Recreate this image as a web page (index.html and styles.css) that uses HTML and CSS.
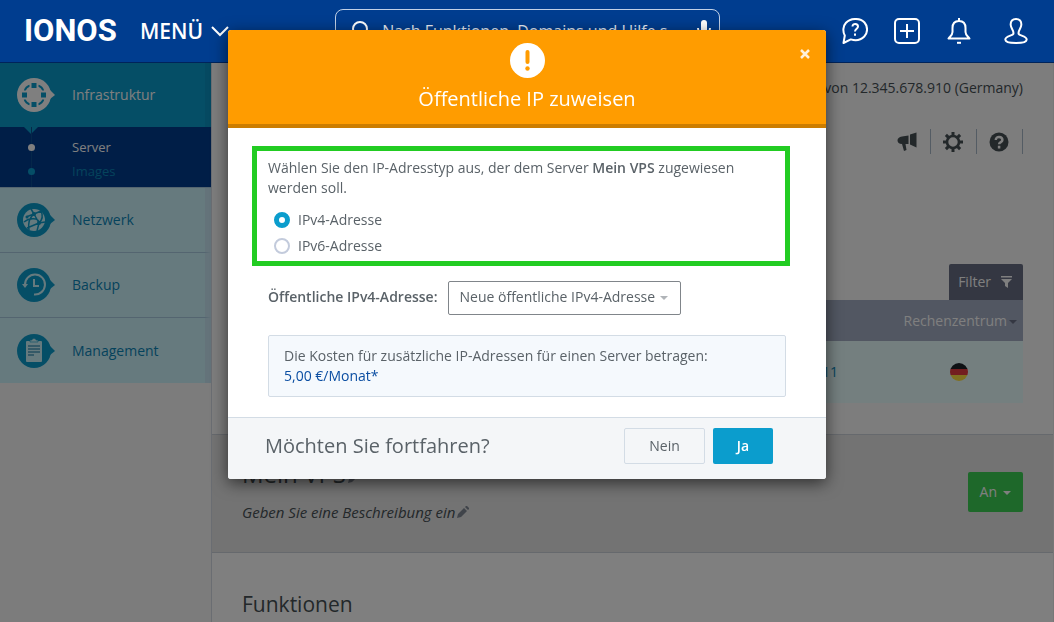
FILE: index.html
```html
<!DOCTYPE html>
<html lang="de">
<head>
    <meta charset="UTF-8">
    <meta name="viewport" content="width=device-width, initial-scale=1.0">
    <title>IONOS - Öffentliche IP zuweisen</title>
    <link rel="stylesheet" href="styles.css">
</head>

<body>

<header class="topbar">
    <a href="#" class="logo">IONOS</a>
    <button class="menu-btn">MENÜ
        <svg width="18" height="12" viewBox="0 0 18 12"><path d="M1 2l8 8 8-8" fill="none" stroke="currentColor" stroke-width="2"/></svg>
    </button>

    <div class="search">
        <svg width="18" height="22" viewBox="0 0 18 22"><circle cx="9" cy="9" r="7" fill="none" stroke="currentColor" stroke-width="2"/><path d="M13 15l4 5" stroke="currentColor" stroke-width="2"/></svg>
        <input type="text" placeholder="Nach Funktionen, Domains und Hilfe s" aria-label="Suche">
        <svg width="14" height="22" viewBox="0 0 14 22"><rect x="4" y="0" width="6" height="13" rx="3" fill="currentColor"/><path d="M1 8c0 9 12 9 12 0M7 15v6M3 21h8" fill="none" stroke="currentColor" stroke-width="2"/></svg>
    </div>

    <nav class="top-icons">
        <button aria-label="Hilfe">
            <svg width="26" height="26" viewBox="0 0 26 26" fill="none" stroke="currentColor" stroke-width="2"><path d="M1.5 25l1.3-7.5C.5 13.500 1 8 4 4.800 8.500-.2 18-.3 22.500 4.500c3.500 4 3.400 10.300-.2 14-4 4-9.300 4.300-13.500 2.900L1.500 25z" stroke-linejoin="round"/><path d="M10.500 8.500c0-3.500 5.500-3.300 5.500 0 0 2.200-3 2.200-3 5"/><path d="M13 15.500v2.300"/></svg>
        </button>
        <button aria-label="Hinzufügen">
            <svg width="26" height="26" viewBox="0 0 26 26" fill="none" stroke="currentColor" stroke-width="2"><rect x="1" y="1" width="24" height="24" rx="4"/><path d="M13 6v14M6 13h14"/></svg>
        </button>
        <button aria-label="Benachrichtigungen">
            <svg width="26" height="26" viewBox="0 0 26 26" fill="none" stroke="currentColor" stroke-width="2"><path d="M13 0v3M13 3c-4.500 0-6.500 3-6.500 7v4c0 3-2 4-4 6.500h21c-2-2.500-4-3.500-4-6.500v-4c0-4-2-7-6.500-7z" stroke-linejoin="round"/><path d="M11 24.800h4"/></svg>
        </button>
        <button class="account" aria-label="Konto">
            <svg width="26" height="26" viewBox="0 0 26 26" fill="none" stroke="currentColor" stroke-width="2"><path d="M13 1c-3.500 0-5.600 2-5.300 6 .2 3.500 3.800 6 2.600 9-.8 1.700-8 2-8 5.500 0 2.500 5 3.500 10.700 3.500s10.700-1 10.700-3.500c0-3.500-7.200-3.800-8-5.500-1.200-3 2.400-5.500 2.600-9 .3-4-1.800-6-5.300-6z" stroke-linejoin="round"/></svg>
        </button>
    </nav>
</header>

<div class="page">
    <aside class="sidebar">
        <a href="#" class="side-item active">
            <svg width="38" height="34" viewBox="0 0 38 34"><circle cx="17" cy="17" r="17" fill="#fff"/><path d="M33 12l5 5-5 4z" fill="#fff"/><rect x="7.500" y="7.500" width="19" height="19" rx="7" fill="none" stroke="#0b9dcd" stroke-width="2"/><g fill="#0b9dcd" stroke="#fff" stroke-width="2"><path d="M13.500 4h7v7h-7zM13.500 23h7v7h-7zM4 13.500h7v7H4zM23 13.500h7v7h-7z"/></g></svg>
            Infrastruktur
        </a>
        <ul class="submenu">
            <li class="current"><a href="#">Server</a></li>
            <li><a href="#">Images</a></li>
        </ul>
        <a href="#" class="side-item">
            <svg width="38" height="34" viewBox="0 0 38 34"><circle cx="17" cy="17" r="17" fill="#0b9dcd"/><path d="M33 12l5 5-5 4z" fill="#0b9dcd"/><circle cx="17" cy="17" r="11" fill="#cdf4fd"/><path d="M17 11L9 14M17 11l5 9M17 11l7-3M17 11l-3-5M17 11c-5 4-6 10-5 16M22 20l-12 5M22 20l6-1M22 20l-2 8M22 20c0-5-9-6-15-1M22 20c4-4 4-8 2-12" fill="none" stroke="#0b9dcd" stroke-width="1.500"/><circle cx="17" cy="11" r="2" fill="#0b9dcd"/><circle cx="22" cy="20" r="2" fill="#0b9dcd"/><circle cx="10" cy="14" r="1.500" fill="#0b9dcd"/></svg>
            Netzwerk
        </a>
        <a href="#" class="side-item">
            <svg width="38" height="34" viewBox="0 0 38 34"><circle cx="17" cy="17" r="17" fill="#0b9dcd"/><path d="M33 12l5 5-5 4z" fill="#0b9dcd"/><path d="M8 17a10 10 0 1 1 9 9.500" fill="none" stroke="#cdf4fd" stroke-width="2"/><path d="M5 16h6l-3 4z" fill="#cdf4fd"/><path d="M17 11v7h5" fill="none" stroke="#cdf4fd" stroke-width="2"/></svg>
            Backup
        </a>
        <a href="#" class="side-item">
            <svg width="38" height="34" viewBox="0 0 38 34"><circle cx="17" cy="17" r="17" fill="#0b9dcd"/><path d="M33 12l5 5-5 4z" fill="#0b9dcd"/><rect x="9" y="7" width="16" height="21" rx="1" fill="#cdf4fd"/><path d="M13 8V6h2c0-2 4-2 4 0h2v2z" fill="#cdf4fd" stroke="#0b9dcd" stroke-width=".6"/><path d="M11 12h12M11 15h12M11 18h12M11 21h6" stroke="#4a9cbf" stroke-width="1.500"/></svg>
            Management
        </a>
    </aside>

    <main class="content">
        <section class="overview">
            <p class="login-info">von 12.345.678.910 (Germany)</p>

            <div class="tools">
                <button aria-label="Neuigkeiten">
                    <svg width="20" height="20" viewBox="0 0 20 20" fill="currentColor"><path d="M13 2.500l6.500-2v15l-6.500-3zM11.500 3.500v8.500H8.500l1 6-2.500 1-2-7c-6 0-6-7 0-7.500z"/></svg>
                </button>
                <button aria-label="Einstellungen">
                    <svg width="20" height="20" viewBox="0 0 20 20"><circle cx="10" cy="10" r="6" fill="none" stroke="currentColor" stroke-width="2.600"/><path d="M10 0v3.500M10 16.500V20M0 10h3.500M16.500 10H20M2.900 2.900l2.500 2.500M14.600 14.600l2.500 2.500M17.100 2.900l-2.500 2.500M5.400 14.600l-2.500 2.500" stroke="currentColor" stroke-width="3"/></svg>
                </button>
                <button aria-label="Hilfe">
                    <svg width="20" height="20" viewBox="0 0 20 20"><circle cx="10" cy="10" r="9.500" fill="currentColor"/><path d="M6.800 8c0-4.300 6.600-4 6.600 0 0 2.200-3.300 2-3.300 4.300M10.100 13.800v2.600" fill="none" stroke="#fff" stroke-width="2.500"/></svg>
                </button>
            </div>

            <button class="filter-btn">Filter
                <svg width="11" height="12" viewBox="0 0 11 12" fill="currentColor"><path d="M0 0h11v1.500H0zM0 3h11L7 7v5L4 10V7z"/></svg>
            </button>
            <table class="servers">
                <thead>
                    <tr><th></th><th>Rechenzentrum<i class="caret"></i></th></tr>
                </thead>
                <tbody>
                    <tr>
                        <td class="ip">11</td>
                        <td class="location">
                            <svg width="18" height="18" viewBox="0 0 18 18" role="img" aria-label="Deutschland"><clipPath id="round"><circle cx="9" cy="9" r="9"/></clipPath><g clip-path="url(#round)"><path d="M0 0h18v6H0z" fill="#1c2228"/><path d="M0 6h18v6H0z" fill="#e63c40"/><path d="M0 12h18v6H0z" fill="#ffe040"/></g></svg>
                        </td>
                    </tr>
                </tbody>
            </table>
        </section>

        <section class="detail">
            <div>
                <h2>Mein VPS<svg width="12" height="12" viewBox="0 0 12 12" fill="currentColor"><path d="M0 12l1-4 6-6 3 3-6 6zM8 1l1-1h1l2 2v1l-1 1z"/></svg></h2>
                <p>Geben Sie eine Beschreibung ein<svg width="12" height="12" viewBox="0 0 12 12" fill="currentColor"><path d="M0 12l1-4 6-6 3 3-6 6zM8 1l1-1h1l2 2v1l-1 1z"/></svg></p>
            </div>
            <button class="power-btn">An<i class="caret"></i></button>
        </section>

        <section class="features">
            <h2>Funktionen</h2>
        </section>
    </main>
    <div class="backdrop"></div>
</div>

<div class="modal-layer">
    <div class="modal" role="dialog" aria-modal="true" aria-labelledby="modal-title">
        <div class="modal-header">
            <svg width="35" height="35" viewBox="0 0 35 35"><circle cx="17.500" cy="17.500" r="17.500" fill="#fff"/><path d="M17.500 9v10" stroke="#ff9c00" stroke-width="4" stroke-linecap="round"/><circle cx="17.500" cy="25.500" r="2.200" fill="#ff9c00"/></svg>
            <h1 id="modal-title">Öffentliche IP zuweisen</h1>
            <button class="close-btn" aria-label="Schließen">
                <svg width="10" height="10" viewBox="0 0 10 10"><path d="M1 1l8 8M9 1L1 9" stroke="currentColor" stroke-width="2.500"/></svg>
            </button>
        </div>

        <div class="modal-body">
            <div class="type-box">
                <p>Wählen Sie den IP-Adresstyp aus, der dem Server <b>Mein VPS</b> zugewiesen werden soll.</p>
                <div class="options">
                    <label><input type="radio" name="ip-type" checked>IPv4-Adresse</label>
                    <label><input type="radio" name="ip-type">IPv6-Adresse</label>
                </div>
            </div>

            <div class="address-row">
                <label for="address">Öffentliche IPv4-Adresse:</label>
                <div class="select">
                    <select id="address">
                        <option>Neue öffentliche IPv4-Adresse</option>
                    </select>
                    <i class="caret"></i>
                </div>
            </div>

            <div class="costs">
                <p>Die Kosten für zusätzliche IP-Adressen für einen Server betragen:</p>
                <a href="#">5,00 €/Monat*</a>
            </div>
        </div>

        <div class="modal-footer">
            <h2>Möchten Sie fortfahren?</h2>
            <button class="btn-no">Nein</button>
            <button class="btn-yes">Ja</button>
        </div>
    </div>
</div>

</body>
</html>
```
FILE: styles.css
```css
* {
    box-sizing: border-box;
    margin: 0;
    padding: 0;
}

body {
    font-family: "Open Sans", "Noto Sans", sans-serif;
    font-size: 14px;
    line-height: 20px;
    color: #465055;
    background: #fff;
    min-height: 100vh;
    display: flex;
    flex-direction: column;
}

button,
input,
select {
    font: inherit;
    color: inherit;
    background: none;
    border: none;
}

button {
    cursor: pointer;
}

a {
    text-decoration: none;
}

h1,
h2 {
    font-size: 20px;
    font-weight: 400;
    line-height: 28px;
}

svg {
    flex: none;
}

.caret {
    display: inline-block;
    border: 4px solid transparent;
    border-top-color: currentColor;
    border-bottom: none;
}

/* Top bar */
.topbar {
    flex: none;
    height: 63px;
    display: flex;
    align-items: center;
    padding: 0 25px 0 24px;
    background: #003d8f;
    border-bottom: 1px solid #00245a;
    color: #fff;
}

.logo {
    width: 116px;
    color: #fff;
    font-family: Roboto, "Open Sans", sans-serif;
    font-size: 31px;
    font-weight: 700;
}

.menu-btn {
    display: flex;
    align-items: center;
    gap: 8px;
    font-size: 21px;
    font-weight: 600;
}

.search {
    flex: 0 1 385px;
    height: 44px;
    margin-left: 106px;
    padding: 0 8px 0 15px;
    display: flex;
    align-items: center;
    gap: 13px;
    border: 1px solid #c0d0e6;
    border-radius: 8px;
}

.search input {
    flex: 1;
    min-width: 0;
    font-size: 16px;
}

.search input::placeholder {
    color: #fff;
    opacity: 0.9;
}

.top-icons {
    margin-left: auto;
    display: flex;
    gap: 26px;
}

.top-icons button {
    height: 26px;
}

.top-icons .account {
    margin-left: 5px;
}

/* Page */
.page {
    flex: 1;
    position: relative;
    display: flex;
}

.backdrop {
    position: absolute;
    inset: 0;
    z-index: 2;
    background: rgba(0, 0, 0, 0.5);
}

/* Sidebar */
.sidebar {
    flex: none;
    width: 212px;
    background: #f8f8f8;
    border-right: 1px solid #d4dbe4;
}

.side-item {
    display: flex;
    align-items: center;
    gap: 17px;
    height: 65px;
    padding-left: 17px;
    color: #0b86b8;
    background: #cdf4fd;
    border-right: 6px solid #c8e6f4;
    border-bottom: 1px solid #a8cbe0;
}

.side-item:last-child {
    border-bottom: none;
}

.side-item.active {
    height: 64px;
    color: #fff;
    background: #0b9dcd;
    border-right-color: #0a92c2;
    border-bottom: none;
}

.submenu {
    position: relative;
    height: 61px;
    padding-top: 8px;
    list-style: none;
    background: #003d8f;
    border-bottom: 1px solid #a8cbe0;
    font-size: 13px;
    line-height: 24px;
}

.submenu::before {
    content: "";
    position: absolute;
    top: 0;
    left: 24px;
    border: 7px solid transparent;
    border-top-color: #0b9dcd;
    border-bottom: none;
}

.submenu::after {
    content: "";
    position: absolute;
    top: 0;
    bottom: 0;
    left: 31px;
    width: 1px;
    background: #0b4f93;
}

.submenu li {
    display: flex;
    align-items: center;
    gap: 37px;
    padding-left: 28px;
}

.submenu li::before {
    content: "";
    width: 7px;
    height: 7px;
    border-radius: 50%;
    background: #0b9dcd;
    z-index: 1;
}

.submenu a {
    color: #0b86b8;
}

.submenu .current::before {
    background: #fff;
}

.submenu .current a {
    color: #fff;
}

/* Content */
.content {
    flex: 1;
    border-right: 1px solid #eee;
}

.overview {
    height: 371px;
    padding: 15px 30px 0;
    display: flex;
    flex-direction: column;
    align-items: flex-end;
    background: #fafafa;
}

.tools {
    display: flex;
    margin: 31px 0 110px;
    color: #465055;
}

.tools button {
    width: 46px;
    height: 25px;
    padding: 3px 1px 0 0;
    border-right: 1px solid #a9b8c8;
}

.filter-btn {
    display: flex;
    align-items: center;
    gap: 10px;
    height: 36px;
    padding: 0 11px 0 9px;
    background: #686f84;
    color: #fff;
    border-radius: 2px 2px 0 0;
}

.servers {
    width: 100%;
    border-collapse: collapse;
}

.servers th {
    height: 41px;
    padding-right: 6px;
    background: #a4aec4;
    color: #fff;
    font-weight: 400;
    text-align: right;
}

.servers th .caret {
    margin-left: 2px;
    color: #686f84;
    vertical-align: middle;
}

.servers td {
    height: 62px;
    background: #e8ffff;
    text-align: right;
}

.servers .ip {
    color: #0b86b8;
}

.servers .location {
    width: 185px;
    padding-right: 55px;
}

.location svg {
    display: block;
    margin-left: auto;
}

.detail {
    display: flex;
    justify-content: space-between;
    align-items: center;
    height: 119px;
    padding: 0 30px 4px;
    background: #e6e6e6;
    border-top: 1px solid #ccd3da;
    border-bottom: 1px solid #ccd3da;
}

.detail h2 {
    margin-bottom: 16px;
    font-size: 24px;
    line-height: 24px;
}

.detail p {
    font-size: 15px;
    font-style: italic;
}

.detail svg {
    margin-left: 2px;
    color: #808894;
}

.power-btn {
    height: 40px;
    padding: 0 12px;
    background: #3cd054;
    color: #fff;
    border-radius: 2px;
}

.power-btn .caret {
    margin-left: 6px;
    vertical-align: middle;
}

.features {
    padding: 37px 30px 0;
}

.features h2 {
    font-size: 21px;
}

/* Modal */
.modal-layer {
    position: fixed;
    inset: 0;
    z-index: 3;
    display: flex;
    justify-content: center;
    align-items: flex-start;
    padding-top: 30px;
}

.modal {
    width: 598px;
    max-width: 100%;
    background: #fff;
    border-radius: 3px;
    box-shadow: 0 4px 16px rgba(0, 0, 0, 0.6);
    color: #5a6268;
    overflow: hidden;
}

.modal-header {
    position: relative;
    height: 98px;
    padding-top: 13px;
    background: #ff9c00;
    border-bottom: 4px solid #cc7d00;
    color: #fff;
    text-align: center;
}

.modal-header svg {
    display: block;
    margin: 0 auto;
}

.modal-header h1 {
    margin-top: 7px;
}

.close-btn {
    position: absolute;
    top: 19px;
    right: 16px;
    opacity: 0.85;
}

.modal-body {
    padding: 18px 36px 20px 24px;
}

.type-box {
    padding: 7px 11px 2px;
    border: 5px solid #22cc22;
}

.type-box b {
    font-weight: 600;
}

.options {
    margin: 9px 0 0 6px;
}

.options label {
    display: flex;
    align-items: center;
    gap: 8px;
    height: 26px;
}

.options input {
    appearance: none;
    width: 16px;
    height: 16px;
    border: 2px solid #c3cbdc;
    border-radius: 50%;
}

.options input:checked {
    border: 5px solid #0b9dcd;
}

.address-row {
    display: flex;
    align-items: center;
    gap: 11px;
    margin: 15px 0 20px 16px;
}

.address-row label {
    padding-bottom: 2px;
    font-weight: 600;
}

.select {
    position: relative;
}

.select select {
    appearance: none;
    height: 34px;
    padding: 0 25px 2px 10px;
    border: 1px solid #80858a;
    border-radius: 2px;
}

.select .caret {
    position: absolute;
    top: 15px;
    right: 13px;
    color: #b0b4b8;
    pointer-events: none;
}

.costs {
    margin: 0 4px 0 16px;
    padding: 10px 15px;
    background: #f5f9fd;
    border: 1px solid #d3dce5;
    border-radius: 2px;
}

.costs a {
    color: #0b4ea2;
}

.modal-footer {
    display: flex;
    align-items: center;
    gap: 8px;
    height: 62px;
    padding: 0 53px 5px 37px;
    background: #f4f6f8;
    border-top: 1px solid #d3dce5;
}

.modal-footer h2 {
    margin-right: auto;
}

.modal-footer button {
    height: 36px;
    border-radius: 2px;
}

.btn-no {
    width: 81px;
    border: 1px solid #d3dce5;
}

.btn-yes {
    width: 60px;
    background: #0b9dcd;
    color: #fff;
    font-weight: 600;
}
```
